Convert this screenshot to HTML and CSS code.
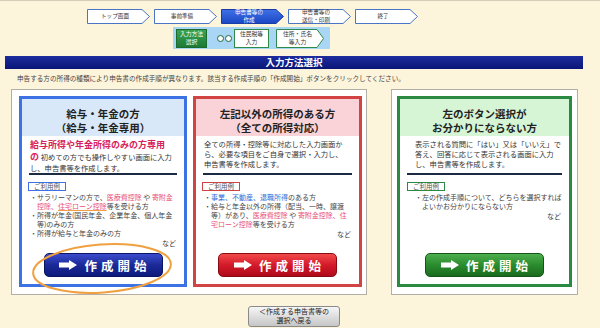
FILE: index.html
```html
<!DOCTYPE html>
<html lang="ja">
<head>
  <meta charset="UTF-8" />
  <meta name="viewport" content="width=device-width, initial-scale=1.0"/>
  <title>入力方法選択</title>
  <link rel="stylesheet" href="styles.css">
</head>
<body>

<div class="page">
  <div class="steps">
    <div class="step">
      <svg viewBox="0 0 63 15" preserveAspectRatio="none"><polygon points="0.5,0.5 55,0.5 62.5,7.5 55,14.5 0.5,14.5" fill="#fff" stroke="#4a74c4"/></svg>
      <span>トップ画面</span>
    </div>
    <div class="step">
      <svg viewBox="0 0 63 15" preserveAspectRatio="none"><polygon points="0.5,0.5 55,0.5 62.5,7.5 55,14.5 0.5,14.5" fill="#fff" stroke="#4a74c4"/></svg>
      <span>事前準備</span>
    </div>
    <div class="step step-now">
      <svg viewBox="0 0 63 15" preserveAspectRatio="none">
        <defs><linearGradient id="gNow" x1="0" y1="0" x2="0" y2="1"><stop offset="0" stop-color="#3f72e6"/><stop offset="1" stop-color="#1b46c4"/></linearGradient></defs>
        <polygon points="0.5,0.5 55,0.5 62.5,7.5 55,14.5 0.5,14.5" fill="url(#gNow)" stroke="#1a3ca8"/>
      </svg>
      <span>申告書等の<br>作成</span>
    </div>
    <div class="step">
      <svg viewBox="0 0 63 15" preserveAspectRatio="none"><polygon points="0.5,0.5 55,0.5 62.5,7.5 55,14.5 0.5,14.5" fill="#fff" stroke="#4a74c4"/></svg>
      <span>申告書等の<br>送信・印刷</span>
    </div>
    <div class="step">
      <svg viewBox="0 0 63 15" preserveAspectRatio="none"><polygon points="0.5,0.5 55,0.5 62.5,7.5 55,14.5 0.5,14.5" fill="#fff" stroke="#4a74c4"/></svg>
      <span>終了</span>
    </div>
  </div>

  <div class="substeps">
    <div class="sub sub-now">入力方法<br>選択</div>
    <div class="dots"><i class="dot"></i><i class="dot"></i></div>
    <div class="sub sub-mid">住民税等<br>入力</div>
    <div class="sub sub-last">
      <svg viewBox="0 0 48 19" preserveAspectRatio="none"><polygon points="0.5,0.5 41,0.5 47.5,9.5 41,18.5 0.5,18.5" fill="#fff" stroke="#2e8a4a"/></svg>
      <span>住所・氏名<br>等入力</span>
    </div>
  </div>

  <h1 class="title-bar">入力方法選択</h1>
  <p class="lead">申告する方の所得の種類により申告書の作成手順が異なります。該当する作成手順の「作成開始」ボタンをクリックしてください。</p>

  <div class="choices">
    <div class="group">
      <div class="card card-blue">
        <div class="card-head">給与・年金の方<br>（給与・年金専用）</div>
        <div class="desc"><span class="em">給与所得や年金所得のみの方専用<br>の</span> 初めての方でも操作しやすい画面に入力<br>し、申告書等を作成します。</div>
        <div class="rule"></div>
        <div class="examples">
          <span class="tag">ご利用例</span>
          <ul>
            <li>・サラリーマンの方で、<span class="pink">医療費控除</span> や <span class="pink">寄附金<br>控除、<span class="mark">住宅ローン控除</span></span>等を受ける方</li>
            <li>・所得が年金(国民年金、企業年金、個人年金<br>等)のみの方</li>
            <li>・所得が給与と年金のみの方</li>
          </ul>
          <div class="etc">など</div>
        </div>
        <a class="start start-blue" href="#">
          <svg viewBox="0 0 18 10" width="18" height="10"><polygon points="0,2.5 10,2.5 10,0 18,5 10,10 10,7.5 0,7.5" fill="#fff"/></svg>
          作成開始
        </a>
        <svg class="circle" viewBox="0 0 142 53"><ellipse cx="71" cy="26.5" rx="69" ry="24" fill="none" stroke="#f0a040" stroke-width="2" transform="rotate(-4 71 26.5)"/></svg>
      </div>

      <div class="card card-red">
        <div class="card-head">左記以外の所得のある方<br>（全ての所得対応）</div>
        <div class="desc">全ての所得・控除等に対応した入力画面か<br>ら、必要な項目をご自身で選択・入力し、<br>申告書等を作成します。</div>
        <div class="rule"></div>
        <div class="examples">
          <span class="tag">ご利用例</span>
          <ul>
            <li>・<span class="blue">事業、不動産、退職所得</span>のある方</li>
            <li>・給与と年金以外の所得（配当、一時、譲渡<br>等）があり、<span class="pink">医療費控除</span> や <span class="pink">寄附金控除、住<br>宅ローン控除</span>等を受ける方</li>
          </ul>
          <div class="etc">など</div>
        </div>
        <a class="start start-red" href="#">
          <svg viewBox="0 0 18 10" width="18" height="10"><polygon points="0,2.5 10,2.5 10,0 18,5 10,10 10,7.5 0,7.5" fill="#fff"/></svg>
          作成開始
        </a>
      </div>
    </div>

    <div class="group group-right">
      <div class="card card-green">
        <div class="card-head">左のボタン選択が<br>お分かりにならない方</div>
        <div class="desc">表示される質問に「はい」又は「いいえ」で<br>答え、回答に応じて表示される画面に入力<br>し、申告書等を作成します。</div>
        <div class="rule"></div>
        <div class="examples">
          <span class="tag">ご利用例</span>
          <ul>
            <li>・左の作成手順について、どちらを選択すれば<br>よいかお分かりにならない方</li>
          </ul>
          <div class="etc">など</div>
        </div>
        <a class="start start-green" href="#">
          <svg viewBox="0 0 18 10" width="18" height="10"><polygon points="0,2.5 10,2.5 10,0 18,5 10,10 10,7.5 0,7.5" fill="#fff"/></svg>
          作成開始
        </a>
      </div>
    </div>
  </div>

  <div class="back">
    <button type="button">＜作成する申告書等の<br>選択へ戻る</button>
  </div>
</div>

</body>
</html>
```

FILE: styles.css
```css
body {
  margin: 0;
  background: #fdf4dc;
  border-top: 1px solid #d6cdb8;
  font-family: "Noto Sans CJK JP", "Noto Sans", sans-serif;
  color: #333;
}
.page {
  width: 578px;
  margin-left: 5px;
}

/* flow of steps */
.steps {
  display: flex;
  gap: 4px;
  margin: 8px 0 0 82px;
}
.step {
  position: relative;
  width: 63px;
  height: 15px;
  padding-right: 7px;
  box-sizing: border-box;
  display: flex;
  align-items: center;
  justify-content: center;
  text-align: center;
  font-size: 5.6px;
  line-height: 7.5px;
  color: #333;
}
.step svg,
.sub-last svg {
  position: absolute;
  top: 0;
  left: 0;
  width: 100%;
  height: 100%;
}
.step span,
.sub-last span {
  position: relative;
}
.step-now {
  color: #fff;
}
.substeps {
  display: flex;
  align-items: center;
  width: 157px;
  height: 22px;
  margin: 3px 0 0 168px;
  padding-left: 3px;
  box-sizing: border-box;
  background: #a8d6f4;
}
.sub {
  position: relative;
  height: 19px;
  box-sizing: border-box;
  display: flex;
  align-items: center;
  justify-content: center;
  text-align: center;
  font-size: 5.8px;
  line-height: 8px;
  color: #333;
  background: #fff;
  border: 1px solid #2e8a4a;
}
.sub-now {
  width: 31px;
  color: #fff;
  background: linear-gradient(#3aa452, #1d7a36);
  border-color: #1d6a30;
}
.dots {
  display: flex;
  gap: 1px;
  margin: 0 2px 0 10px;
}
.dot {
  width: 7px;
  height: 7px;
  box-sizing: border-box;
  border: 1.5px solid #1e6a3a;
  border-radius: 50%;
  background: #fff;
}
.sub-mid {
  width: 35px;
}
.sub-last {
  width: 48px;
  margin-left: 7px;
  padding-right: 5px;
  background: none;
  border: none;
}

.title-bar {
  margin: 7px 0 0;
  height: 13px;
  background: linear-gradient(#1c2c9e, #0a1676);
  color: #fff;
  font-size: 9.5px;
  line-height: 13px;
  text-align: center;
  font-weight: bold;
}
.lead {
  margin: 5px 0 0 12px;
  font-size: 6.6px;
  line-height: 9px;
  color: #444;
}

/* choice panels */
.choices {
  display: flex;
  gap: 24px;
  margin: 6px 0 0 6px;
}
.group {
  display: flex;
  gap: 6px;
  background: #fff;
  border: 1px solid #b4afa6;
  padding: 6px 4px 7px 7px;
}
.group-right {
  padding: 6px 5px 7px 5px;
}
.card {
  position: relative;
  width: 168px;
  height: 191px;
  box-sizing: border-box;
  display: flex;
  flex-direction: column;
  background: #fff;
  border: 3px solid;
  white-space: nowrap;
}
.card > * {
  flex-shrink: 0;
}
.card-red {
  width: 169px;
}
.card-green {
  width: 175px;
}
.card-blue { border-color: #3d72e4; }
.card-red { border-color: #d24444; }
.card-green { border-color: #2a8a42; }

.card-head {
  padding: 8px 0 1px;
  text-align: center;
  font-size: 10.5px;
  line-height: 14px;
  font-weight: bold;
  color: #222;
}
.card-blue .card-head { background: #d8e8f9; }
.card-red .card-head { background: #f9d3d7; }
.card-green .card-head { background: #d5f5d5; }

.desc {
  height: 37px;
  box-sizing: border-box;
  padding: 3px 8px 0;
  font-size: 7.3px;
  line-height: 10px;
  color: #333;
}
.desc .em {
  color: #d8205a;
  font-weight: bold;
  font-size: 9px;
  line-height: 12px;
}
.card-green .desc {
  padding-left: 15px;
}
.rule {
  height: 2px;
  margin: 0 7px;
  background: #1c2a44;
}
.examples {
  padding: 7px 8px 0 6px;
  font-size: 7px;
  line-height: 9px;
}
.tag {
  display: inline-block;
  vertical-align: top;
  padding: 0 5px;
  border: 1px solid;
  font-size: 6.5px;
  line-height: 7px;
  color: #555;
}
.card-blue .tag { border-color: #3d72e4; }
.card-red .tag { border-color: #d24444; }
.card-green .tag { border-color: #2a8a42; }
.card-green .examples {
  padding-left: 7px;
}
.examples ul {
  margin: 2px 0 0;
  padding: 0 0 0 2px;
  list-style: none;
  color: #444;
}
.card-green .examples ul {
  padding-left: 8px;
}
.examples li {
  padding-left: 7px;
  text-indent: -7px;
}
.pink { color: #e8507a; }
.blue { color: #2f6fd8; }
.mark {
  text-decoration: underline;
  text-decoration-color: #f0a040;
}
.etc {
  margin-top: 1px;
  text-align: right;
  color: #444;
}

.start {
  margin: auto auto 7px;
  width: 119px;
  height: 24px;
  box-sizing: border-box;
  border-radius: 5px;
  display: flex;
  align-items: center;
  justify-content: center;
  gap: 7px;
  padding-left: 4px;
  color: #fff;
  text-decoration: none;
  font-size: 12.5px;
  font-weight: bold;
  letter-spacing: 4px;
}
.start-blue {
  background: linear-gradient(#3a4ccc, #1c2a98 50%, #0e1a7c);
  border: 1px solid #0a1464;
}
.start-red {
  background: linear-gradient(#f24a4a, #d41a2a 50%, #b00a1a);
  border: 1px solid #8a0a14;
}
.start-green {
  background: linear-gradient(#4cae4c, #2a8c2e 50%, #1a6c1e);
  border: 1px solid #14561a;
}
.circle {
  position: absolute;
  left: 9px;
  top: 143px;
  width: 142px;
  height: 53px;
  overflow: visible;
}

.back {
  margin-top: 9px;
  text-align: center;
}
.back button {
  width: 92px;
  height: 21px;
  padding: 0;
  border: 1px solid #8a8a8a;
  border-radius: 3px;
  background: linear-gradient(#f6f6f6, #c6c6c6);
  font-family: inherit;
  font-size: 7px;
  line-height: 9px;
  color: #222;
}
```
